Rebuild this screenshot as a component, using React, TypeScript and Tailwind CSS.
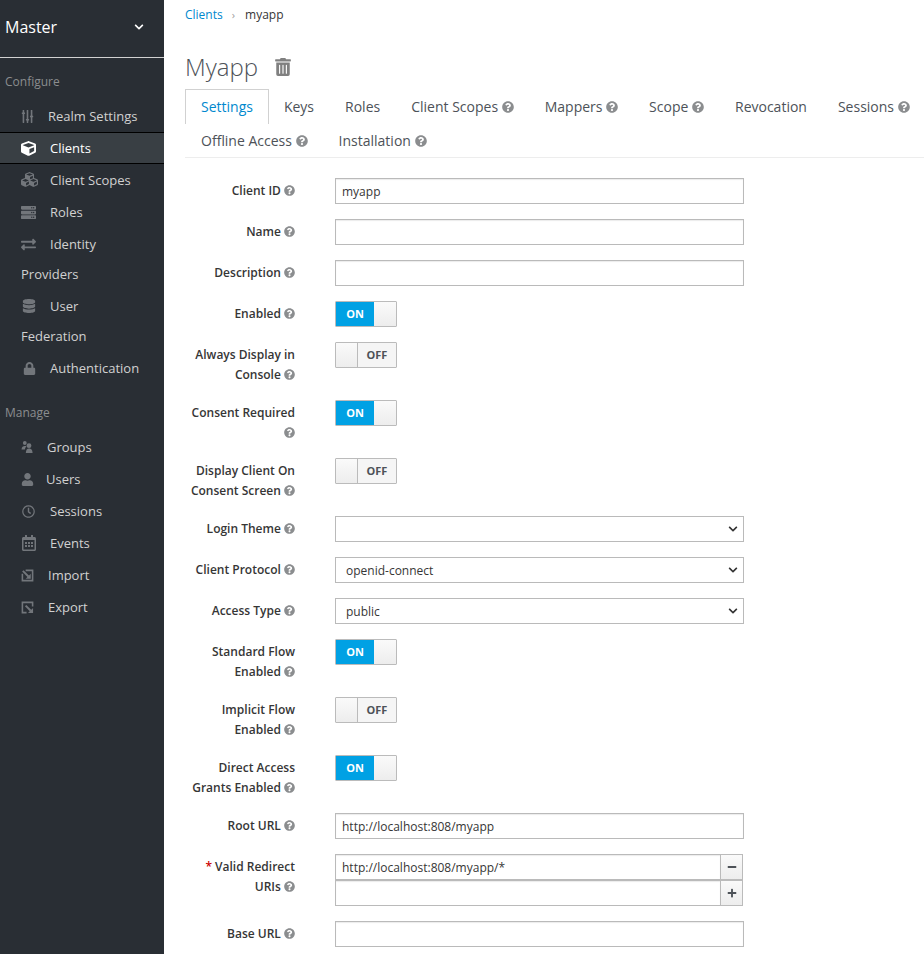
import type { ReactNode } from "react"
import {
  FaChevronDown,
  FaCube,
  FaCubes,
  FaDatabase,
  FaExchangeAlt,
  FaLock,
  FaMinus,
  FaPlus,
  FaQuestionCircle,
  FaRegCalendarAlt,
  FaRegClock,
  FaServer,
  FaSlidersH,
  FaTrashAlt,
  FaUser,
} from "react-icons/fa"

function ImportIcon() {
  return (
    <svg viewBox="0 0 14 14" className="inline-block h-[13px] w-[13px] align-[-2px]" fill="none" stroke="currentColor">
      <path d="M5 1.5h7.5v11h-11V5" strokeWidth="1.7" />
      <path d="M2 2l6 6" strokeWidth="2.2" />
      <path d="M10.5 10.5v-5.5l-5.500 5.500z" fill="currentColor" strokeWidth="0" />
    </svg>
  )
}

function ExportIcon() {
  return (
    <svg viewBox="0 0 14 14" className="inline-block h-[13px] w-[13px] align-[-2px]" fill="none" stroke="currentColor">
      <path d="M12.500 6V1.500h-11v11H6" strokeWidth="1.700" />
      <path d="M5 5l5.500 5.500" strokeWidth="2.200" />
      <path d="M13 13V7.500L7.500 13z" fill="currentColor" strokeWidth="0" />
    </svg>
  )
}

function GroupsIcon() {
  return (
    <svg viewBox="0 0 13 12" className="inline-block h-[12px] w-[13px] align-[-1px]" fill="currentColor">
      <circle cx="3.800" cy="2" r="1.900" />
      <path d="M.5 8.500C.8 5.500 2 5 3.800 5c.8 0 1.300.1 1.800.4C4.600 6 4 7.200 3.900 8.500z" />
      <circle cx="8" cy="4.700" r="2.400" />
      <path d="M4.800 12c.2-3.500 1.200-4.600 3.200-4.600s3.400 1.100 3.600 4.600z" />
    </svg>
  )
}

const configure = [
  { label: "Realm Settings", icon: <FaSlidersH className="inline-block rotate-90 text-[13px] align-[-2px]" />, gap: "w-[27px]" },
  { label: "Clients", icon: <FaCube className="inline-block text-[15px] align-[-3px]" />, gap: "w-[29px]", active: true },
  { label: "Client Scopes", icon: <FaCubes className="inline-block text-[17px] align-[-3px]" />, gap: "w-[29px]" },
  { label: "Roles", icon: <FaServer className="inline-block text-[15px] align-[-3px]" />, gap: "w-[29px]" },
  { label: "Identity Providers", icon: <FaExchangeAlt className="inline-block text-[15px] align-[-3px]" />, gap: "w-[29px]" },
  { label: "User Federation", icon: <FaDatabase className="inline-block text-[14px] align-[-2px] ml-[1px]" />, gap: "w-[29px]" },
  { label: "Authentication", icon: <FaLock className="inline-block text-[13px] align-[-2px] ml-[2px]" />, gap: "w-[29px]" },
]

const manage = [
  { label: "Groups", icon: <GroupsIcon />, gap: "w-[26px]" },
  { label: "Users", icon: <FaUser className="inline-block text-[13px] align-[-2px]" />, gap: "w-[25px]" },
  { label: "Sessions", icon: <FaRegClock className="inline-block text-[13px] align-[-2px] ml-[1px]" />, gap: "w-[29px]" },
  { label: "Events", icon: <FaRegCalendarAlt className="inline-block text-[16px] align-[-3px]" />, gap: "w-[29px]" },
  { label: "Import", icon: <ImportIcon />, gap: "w-[27px]" },
  { label: "Export", icon: <ExportIcon />, gap: "w-[27px]" },
]

const tabs = [
  { label: "Settings", active: true },
  { label: "Keys" },
  { label: "Roles" },
  { label: "Client Scopes", help: true },
  { label: "Mappers", help: true },
  { label: "Scope", help: true },
  { label: "Revocation" },
  { label: "Sessions", help: true },
  { label: "Offline Access", help: true, first: true },
  { label: "Installation", help: true },
]

type NavItem = { label: string; icon: ReactNode; gap: string; active?: boolean }

function SideLink({ item }: { item: NavItem }) {
  return (
    <a
      className={
        item.active
          ? "block border-y border-black bg-[#393f44] pr-[20px] pl-[21px] text-[13px] leading-[30px] text-white"
          : "block border-y border-transparent pr-[20px] pl-[21px] text-[13px] leading-[30px] text-[#d1d1d1]"
      }
    >
      <span className={`inline-block ${item.gap} ${item.active ? "text-white" : "text-[#72767b]"}`}>{item.icon}</span>
      {item.label}
    </a>
  )
}

function Help({ size = "text-[11px]" }: { size?: string }) {
  return <FaQuestionCircle className={`inline-block ${size} align-[-1px] text-[#8b8d8f]`} />
}

function Row({ label, required, children }: { label: string; required?: boolean; children: ReactNode }) {
  return (
    <div className="mb-[15px] flex items-start">
      <label className="w-[110px] shrink-0 pt-[3px] text-right text-[12px] leading-[20px] font-semibold text-[#363636]">
        {required && <span className="text-[#cc0000]">* </span>}
        {label} <Help />
      </label>
      <div className="ml-[40px] w-[409px]">{children}</div>
    </div>
  )
}

function Input({ value = "" }: { value?: string }) {
  return (
    <input
      readOnly
      value={value}
      className="block h-[26px] w-full border border-[#bababa] bg-white px-[6px] text-[12px] text-[#363636] shadow-[inset_0_1px_1px_rgba(3,3,3,0.08)] outline-none"
    />
  )
}

function Select({ value = "" }: { value?: string }) {
  return (
    <div className="flex h-[26px] w-full items-center justify-between border border-[#bababa] bg-white pr-[5px] pl-[10px] text-[12px] text-[#363636]">
      <span className="pt-[1px]">{value}</span>
      <FaChevronDown className="text-[10px] text-[#333]" />
    </div>
  )
}

function Toggle({ on }: { on?: boolean }) {
  return (
    <div className="flex h-[26px] w-[62px] overflow-hidden rounded-[1px] border border-[#bbb] text-[11px] font-bold">
      {on ? (
        <>
          <span className="flex w-[38px] items-center justify-center bg-[#00a1e4] text-white">ON</span>
          <span className="flex-1 bg-gradient-to-b from-[#fafafa] to-[#ededed]" />
        </>
      ) : (
        <>
          <span className="w-[22px] border-r border-[#bbb] bg-gradient-to-b from-[#fafafa] to-[#ededed]" />
          <span className="flex flex-1 items-center justify-center bg-[#f5f5f5] text-[#4d5258]">OFF</span>
        </>
      )}
    </div>
  )
}

function UriRow({ value, icon }: { value?: string; icon: ReactNode }) {
  return (
    <div className="flex h-[26px] w-[408px]">
      <div className="flex-1">
        <Input value={value} />
      </div>
      <button className="-ml-px flex w-[23px] items-center justify-center border border-[#bbb] bg-gradient-to-b from-[#fafafa] to-[#ededed] text-[#4d5258]">
        {icon}
      </button>
    </div>
  )
}

export default function App() {
  return (
    <div className="flex h-screen overflow-hidden bg-white font-['Open_Sans',sans-serif]">
      <aside className="h-full w-[164px] shrink-0 bg-[#292e34]">
        <div className="flex h-[58px] items-center justify-between border-b border-[#d1d1d1] pr-[20px] pb-[4px] pl-[5px] text-[16px] text-white">
          <span>Master</span>
          <FaChevronDown className="text-[10px]" />
        </div>
        <h3 className="mt-[15px] mb-[9px] pl-[5px] text-[12px] leading-[18px] font-normal text-[#8b8d8f]">Configure</h3>
        {configure.map((item) => (
          <SideLink key={item.label} item={item} />
        ))}
        <h3 className="mt-[20px] mb-[9px] pl-[5px] text-[12px] leading-[18px] font-normal text-[#8b8d8f]">Manage</h3>
        {manage.map((item) => (
          <SideLink key={item.label} item={item} />
        ))}
      </aside>

      <main className="min-w-0 flex-1 pl-[21px]">
        <div className="flex h-[30px] items-center gap-[9px] text-[12px]">
          <a className="text-[#0088ce]">Clients</a>
          <span className="text-[11px] text-[#9c9c9c]">›</span>
          <span className="ml-[1px] text-[#363636]">myapp</span>
        </div>
        <div className="mt-[17px] mb-[2px] flex h-[40px] items-center text-[#4d5258]">
          <h1 className="text-[24px] font-light">Myapp</h1>
          <FaTrashAlt className="ml-[16px] text-[18px] text-[#808080]" />
        </div>

        <ul className="-mr-[20px] flex flex-wrap border-b border-[#ededed] text-[14px] text-[#4d5258]">
          {tabs.map((tab) => (
            <li
              key={tab.label}
              className={
                tab.active
                  ? "-mb-px h-[35px] border border-b-0 border-[#d1d1d1] bg-white px-[15px] pt-[5px] leading-[24px] text-[#0088ce]"
                  : tab.first
                    ? "h-[34px] pr-[16px] pl-[16px] pt-[6px] leading-[24px]"
                    : "h-[34px] pr-[16px] pl-[15px] pt-[6px] leading-[24px]"
              }
            >
              {tab.label} {tab.help && <Help size="text-[12px]" />}
            </li>
          ))}
        </ul>

        <form className="mt-[20px]">
          <Row label="Client ID"><Input value="myapp" /></Row>
          <Row label="Name"><Input /></Row>
          <Row label="Description"><Input /></Row>
          <Row label="Enabled"><Toggle on /></Row>
          <Row label="Always Display in Console"><Toggle /></Row>
          <Row label="Consent Required"><Toggle on /></Row>
          <Row label="Display Client On Consent Screen"><Toggle /></Row>
          <Row label="Login Theme"><Select /></Row>
          <Row label="Client Protocol"><Select value="openid-connect" /></Row>
          <Row label="Access Type"><Select value="public" /></Row>
          <Row label="Standard Flow Enabled"><Toggle on /></Row>
          <Row label="Implicit Flow Enabled"><Toggle /></Row>
          <Row label="Direct Access Grants Enabled"><Toggle on /></Row>
          <Row label="Root URL"><Input value="http://localhost:808/myapp" /></Row>
          <Row label="Valid Redirect URIs" required>
            <UriRow value="http://localhost:808/myapp/*" icon={<FaMinus className="text-[10px]" />} />
            <UriRow icon={<FaPlus className="text-[10px]" />} />
          </Row>
          <Row label="Base URL"><Input /></Row>
        </form>
      </main>
    </div>
  )
}
